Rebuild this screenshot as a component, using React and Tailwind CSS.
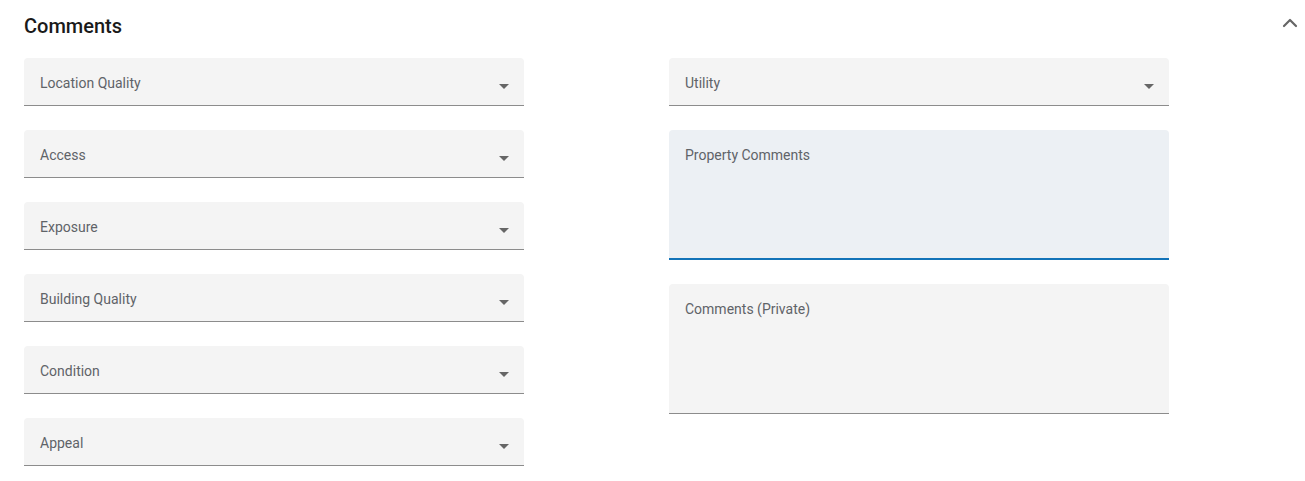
import { ChevronUp } from "lucide-react";

const leftFields = [
  "Location Quality",
  "Access",
  "Exposure",
  "Building Quality",
  "Condition",
  "Appeal",
];

function SelectField({ label }) {
  return (
    <div className="relative h-12 w-[500px] rounded-t-[4px] bg-[#f4f4f4] border-b border-[#8c8c8c]">
      <span className="absolute left-4 top-[17px] text-[14px] leading-4 text-[#5f6368]">
        {label}
      </span>
      {/* dropdown arrow */}
      <span className="absolute right-[15px] top-[26px] w-0 h-0 border-l-[5px] border-r-[5px] border-t-[5px] border-l-transparent border-r-transparent border-t-[#666]" />
    </div>
  );
}

function TextArea({ label, focused }) {
  return (
    <div
      className={`relative h-[130px] w-[500px] rounded-t-[4px] ${
        focused
          ? "bg-[#ecf0f4] border-b-2 border-[#1273b8]"
          : "bg-[#f4f4f4] border-b border-[#8c8c8c]"
      }`}
    >
      <span className="absolute left-4 top-[17px] text-[14px] leading-4 text-[#5f6368]">
        {label}
      </span>
    </div>
  );
}

export default function App() {
  return (
    <div
      className="relative h-[481px] w-[1305px] bg-white"
      style={{ fontFamily: "Roboto, 'Liberation Sans', sans-serif" }}
    >
      <div className="px-6 pt-[14px]">
        {/* HEADER */}
        <h2 className="text-[20px] leading-6 font-medium text-[#1a1a1a]">
          Comments
        </h2>

        <div className="mt-5 flex gap-[145px]">
          <div className="flex flex-col gap-6">
            {leftFields.map((f) => (
              <SelectField key={f} label={f} />
            ))}
          </div>

          <div className="flex flex-col gap-6">
            <SelectField label="Utility" />
            <TextArea label="Property Comments" focused />
            <TextArea label="Comments (Private)" />
          </div>
        </div>
      </div>

      <ChevronUp
        className="absolute right-[3px] top-[11px] text-[#666]"
        size={24}
        strokeWidth={2.2}
      />
    </div>
  );
}
